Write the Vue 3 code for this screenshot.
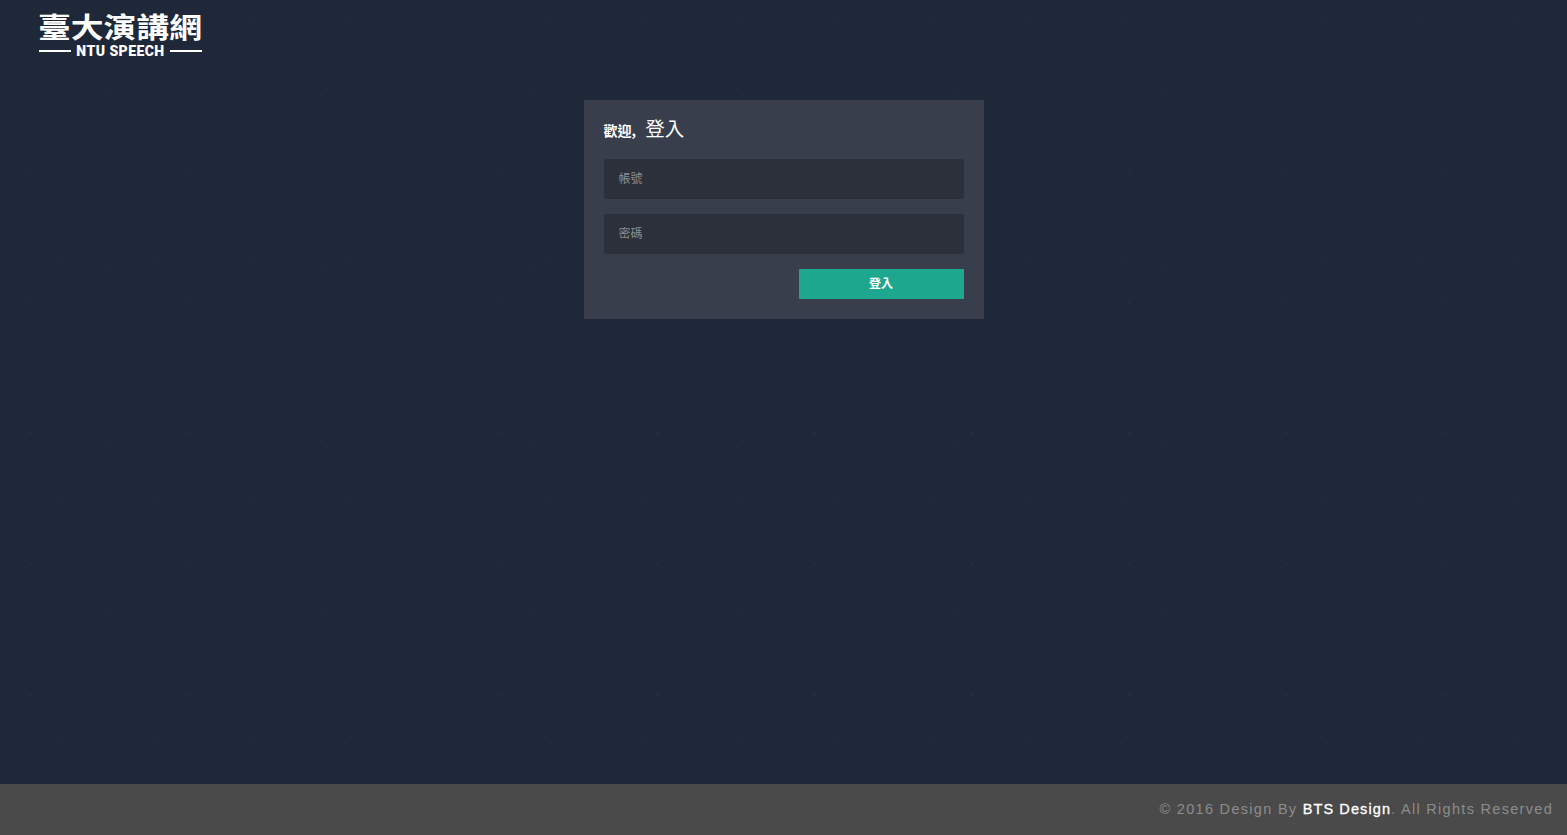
<script setup>
const year = 2016
</script>

<template>
  <div class="page">
    <header class="header">
      <div class="logo">
        <div class="logo-cn">臺大演講網</div>
        <div class="logo-en"><span class="rule"></span><span>NTU SPEECH</span><span class="rule"></span></div>
      </div>
    </header>
    <main class="main">
      <form class="card" @submit.prevent>
        <h1 class="title"><span class="welcome">歡迎,</span> <span class="login">登入</span></h1>
        <input class="field" type="text" placeholder="帳號" />
        <input class="field" type="password" placeholder="密碼" />
        <div class="actions"><button class="submit" type="submit">登入</button></div>
      </form>
    </main>
    <footer class="footer">
      <span>© {{ year }} Design By <b>BTS Design</b>. All Rights Reserved</span>
    </footer>
  </div>
</template>

<style>
html, body { margin: 0; }
</style>

<style scoped>
.page {
  height: 835px;
  display: flex;
  flex-direction: column;
  overflow: hidden;
  font-family: "Liberation Sans", "Noto Sans CJK TC", sans-serif;
  background-color: #1e2839;
  background-image:
    radial-gradient(circle at 30px 40px, rgba(255,255,255,.03) 0 1px, transparent 1.5px),
    radial-gradient(circle at 110px 95px, rgba(255,255,255,.025) 0 1px, transparent 1.5px),
    radial-gradient(circle at 60px 20px, rgba(255,255,255,.025) 0 1px, transparent 1.5px);
  background-size: 157px 131px, 211px 173px, 97px 239px;
}
.header {
  height: 100px;
  flex: none;
  box-sizing: border-box;
  padding: 12px 0 0 38px;
}
.logo { width: 164px; color: #fff; }
.logo-cn {
  font-family: "Noto Sans CJK TC", sans-serif;
  font-weight: 700;
  font-size: 32.8px;
  line-height: 32px;
  height: 32px;
  white-space: nowrap;
  transform: scaleY(.88);
  transform-origin: 50% 0;
}
.logo-en {
  display: flex;
  align-items: center;
  justify-content: space-between;
  margin-top: 1px;
  padding-left: 1px;
  font-family: "Roboto", sans-serif;
  font-weight: 900;
  font-size: 14px;
  line-height: 12px;
  letter-spacing: .45px;
  white-space: nowrap;
}
.rule { width: 32px; height: 2px; background: #fff; }
.main { flex: 1; display: flex; justify-content: center; }
.card {
  width: 400px;
  height: 219px;
  box-sizing: border-box;
  padding: 20px;
  background: #383e4c;
  display: flex;
  flex-direction: column;
}
.title {
  margin: 0 0 15px;
  height: 24px;
  font-weight: 400;
  color: #fff;
  line-height: 20px;
  font-family: "Noto Sans CJK TC", sans-serif;
  white-space: nowrap;
  transform: translateY(-8px);
}
.welcome { font-size: 14px; font-weight: 700; margin-right: 2px; }
.login { font-size: 19.5px; font-weight: 400; }
.field {
  display: block;
  box-sizing: border-box;
  width: 360px;
  height: 40px;
  flex: none;
  margin: 0 0 15px;
  padding: 0 15px 3px;
  border: 0;
  border-radius: 3px;
  outline: 0;
  background: #2c303b;
  color: #fff;
  font-family: "Noto Sans CJK TC", sans-serif;
  font-size: 12px;
}
.field::placeholder { color: #8b8d91; opacity: 1; }
.actions { display: flex; justify-content: flex-end; }
.submit {
  width: 165px;
  height: 30px;
  border: 0;
  padding: 0 0 3px;
  background: #1ca78e;
  color: #fff;
  font-family: "Noto Sans CJK TC", sans-serif;
  font-size: 12px;
  font-weight: 700;
}
.footer {
  height: 51px;
  flex: none;
  box-sizing: border-box;
  padding: 0 14px 2px 0;
  background: #4a4a4a;
  color: #8c8c8c;
  display: flex;
  align-items: center;
  justify-content: flex-end;
  font-size: 14.5px;
  letter-spacing: 1.3px;
  white-space: nowrap;
}
.footer b { color: #fff; font-weight: 400; letter-spacing: 1.1px; -webkit-text-stroke: .3px #fff; }
</style>
